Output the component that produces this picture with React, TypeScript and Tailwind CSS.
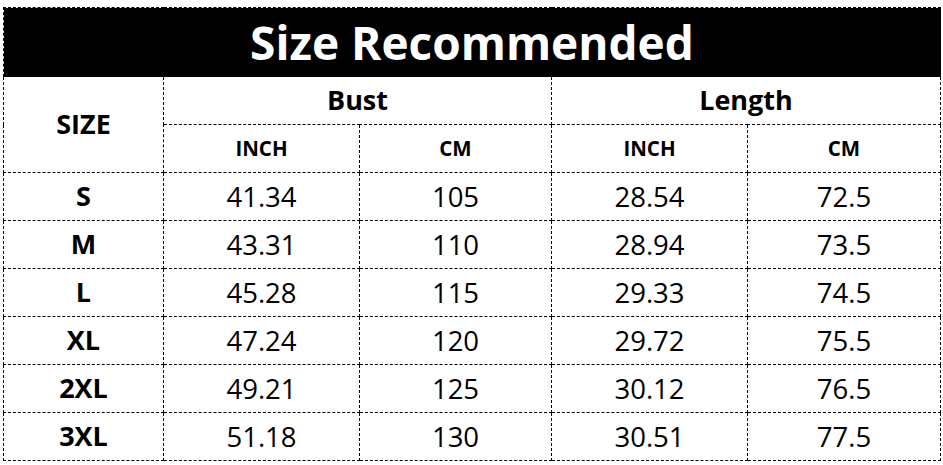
const ROWS = [
  { size: "S", bustIn: "41.34", bustCm: "105", lenIn: "28.54", lenCm: "72.5" },
  { size: "M", bustIn: "43.31", bustCm: "110", lenIn: "28.94", lenCm: "73.5" },
  { size: "L", bustIn: "45.28", bustCm: "115", lenIn: "29.33", lenCm: "74.5" },
  { size: "XL", bustIn: "47.24", bustCm: "120", lenIn: "29.72", lenCm: "75.5" },
  { size: "2XL", bustIn: "49.21", bustCm: "125", lenIn: "30.12", lenCm: "76.5" },
  { size: "3XL", bustIn: "51.18", bustCm: "130", lenIn: "30.51", lenCm: "77.5" },
];

const cell = "border border-dashed border-black p-0 text-center align-middle";

export default function App() {
  return (
    <div className="h-[465px] w-[943px] bg-white pl-[3px] pt-[7px] font-['Open_Sans','Noto_Sans',sans-serif] text-black">
      <table className="w-[937px] table-fixed border-collapse">
        <colgroup>
          <col className="w-[160px]" />
          <col className="w-[196px]" />
          <col className="w-[192px]" />
          <col className="w-[196px]" />
          <col className="w-[193px]" />
        </colgroup>
        <tbody>
          {/* ── Title ── */}
          <tr className="h-[69px]">
            <td
              className={`${cell} bg-black text-[46px] leading-none font-bold text-white`}
              colSpan={5}
            >
              Size Recommended
            </td>
          </tr>

          {/* ── Column headings ── */}
          <tr className="h-[48px]">
            <td className={`${cell} text-[27px] font-bold`} rowSpan={2}>
              SIZE
            </td>
            <td className={`${cell} text-[27px] font-bold`} colSpan={2}>
              Bust
            </td>
            <td className={`${cell} text-[27px] font-bold`} colSpan={2}>
              Length
            </td>
          </tr>
          <tr className="h-[48px]">
            {["INCH", "CM", "INCH", "CM"].map((h, i) => (
              <td className={`${cell} text-[20.5px] font-bold`} key={i}>
                {h}
              </td>
            ))}
          </tr>

          {/* ── Data ── */}
          {ROWS.map((r) => (
            <tr className="h-[48px]" key={r.size}>
              <td className={`${cell} text-[27px] font-bold`}>{r.size}</td>
              <td className={`${cell} text-[27.5px]`}>{r.bustIn}</td>
              <td className={`${cell} text-[27.5px]`}>{r.bustCm}</td>
              <td className={`${cell} text-[27.5px]`}>{r.lenIn}</td>
              <td className={`${cell} text-[27.5px]`}>{r.lenCm}</td>
            </tr>
          ))}
        </tbody>
      </table>
    </div>
  );
}
